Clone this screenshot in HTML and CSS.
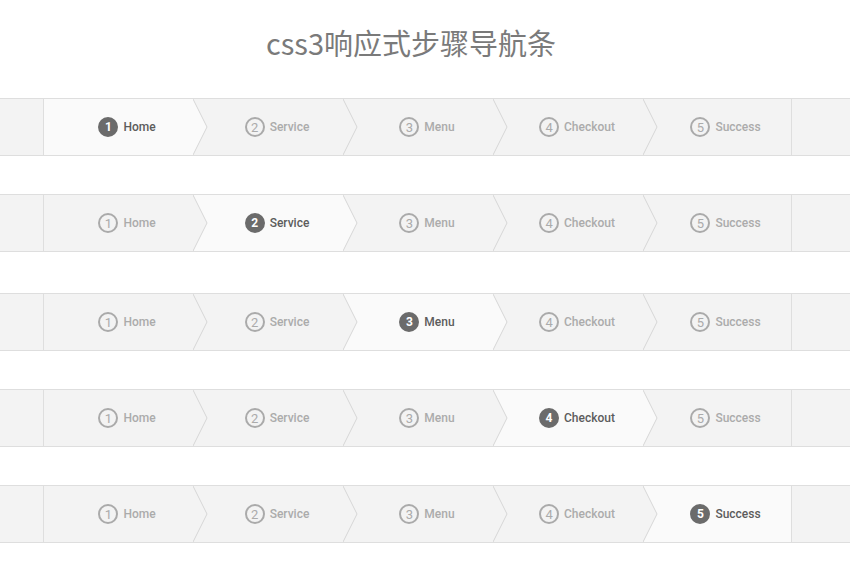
FILE: index.html
```html
<!DOCTYPE html>
<html lang="zh-CN">
<head>
    <meta charset="UTF-8">
    <title>css3响应式步骤导航条</title>
    <link rel="stylesheet" href="styles.css">
</head>
<body>
    <h1>css3响应式步骤导航条</h1>

    <ul class="steps">
        <li class="step first active"><span class="num">1</span>Home<svg class="arrow" width="15" height="56"><polyline points="0,0 14,28 0,56"/></svg></li>
        <li class="step"><span class="num">2</span>Service<svg class="arrow" width="15" height="56"><polyline points="0,0 14,28 0,56"/></svg></li>
        <li class="step"><span class="num">3</span>Menu<svg class="arrow" width="15" height="56"><polyline points="0,0 14,28 0,56"/></svg></li>
        <li class="step"><span class="num">4</span>Checkout<svg class="arrow" width="15" height="56"><polyline points="0,0 14,28 0,56"/></svg></li>
        <li class="step last"><span class="num">5</span>Success</li>
    </ul>

    <ul class="steps">
        <li class="step first"><span class="num">1</span>Home<svg class="arrow" width="15" height="56"><polyline points="0,0 14,28 0,56"/></svg></li>
        <li class="step active"><span class="num">2</span>Service<svg class="arrow" width="15" height="56"><polyline points="0,0 14,28 0,56"/></svg></li>
        <li class="step"><span class="num">3</span>Menu<svg class="arrow" width="15" height="56"><polyline points="0,0 14,28 0,56"/></svg></li>
        <li class="step"><span class="num">4</span>Checkout<svg class="arrow" width="15" height="56"><polyline points="0,0 14,28 0,56"/></svg></li>
        <li class="step last"><span class="num">5</span>Success</li>
    </ul>

    <ul class="steps">
        <li class="step first"><span class="num">1</span>Home<svg class="arrow" width="15" height="56"><polyline points="0,0 14,28 0,56"/></svg></li>
        <li class="step"><span class="num">2</span>Service<svg class="arrow" width="15" height="56"><polyline points="0,0 14,28 0,56"/></svg></li>
        <li class="step active"><span class="num">3</span>Menu<svg class="arrow" width="15" height="56"><polyline points="0,0 14,28 0,56"/></svg></li>
        <li class="step"><span class="num">4</span>Checkout<svg class="arrow" width="15" height="56"><polyline points="0,0 14,28 0,56"/></svg></li>
        <li class="step last"><span class="num">5</span>Success</li>
    </ul>

    <ul class="steps">
        <li class="step first"><span class="num">1</span>Home<svg class="arrow" width="15" height="56"><polyline points="0,0 14,28 0,56"/></svg></li>
        <li class="step"><span class="num">2</span>Service<svg class="arrow" width="15" height="56"><polyline points="0,0 14,28 0,56"/></svg></li>
        <li class="step"><span class="num">3</span>Menu<svg class="arrow" width="15" height="56"><polyline points="0,0 14,28 0,56"/></svg></li>
        <li class="step active"><span class="num">4</span>Checkout<svg class="arrow" width="15" height="56"><polyline points="0,0 14,28 0,56"/></svg></li>
        <li class="step last"><span class="num">5</span>Success</li>
    </ul>

    <ul class="steps">
        <li class="step first"><span class="num">1</span>Home<svg class="arrow" width="15" height="56"><polyline points="0,0 14,28 0,56"/></svg></li>
        <li class="step"><span class="num">2</span>Service<svg class="arrow" width="15" height="56"><polyline points="0,0 14,28 0,56"/></svg></li>
        <li class="step"><span class="num">3</span>Menu<svg class="arrow" width="15" height="56"><polyline points="0,0 14,28 0,56"/></svg></li>
        <li class="step"><span class="num">4</span>Checkout<svg class="arrow" width="15" height="56"><polyline points="0,0 14,28 0,56"/></svg></li>
        <li class="step last active"><span class="num">5</span>Success</li>
    </ul>
</body>
</html>
```

FILE: styles.css
```css
body {
    margin: 0;
    background-color: #fff;
    font-family: Roboto, "Noto Sans", sans-serif;
    overflow: hidden;
}
h1 {
    margin: 0;
    padding: 22px 28px 0 0;
    height: 76px;
    box-sizing: border-box;
    text-align: center;
    font-family: "Noto Sans CJK SC", sans-serif;
    font-size: 29px;
    font-weight: normal;
    line-height: 40px;
    color: #7a7a7a;
}
.steps {
    display: flex;
    list-style: none;
    margin: 22px 0 38px;
    padding: 0 0 0 43px;
    height: 56px;
    background-color: #f3f3f3;
    border-top: 1px solid #dedede;
    border-bottom: 1px solid #dedede;
}
.steps + .steps {
    margin-top: 0;
}
.steps:nth-of-type(2) {
    margin-bottom: 41px;
}
.step {
    position: relative;
    display: flex;
    align-items: center;
    justify-content: center;
    width: 150px;
    padding-left: 16px;
    box-sizing: border-box;
    font-size: 12px;
    font-weight: 500;
    color: #ababab;
    background-color: #f3f3f3;
}
.step.first {
    width: 151px;
    border-left: 1px solid #dedede;
}
.step.last {
    width: 148px;
    border-right: 1px solid #dedede;
}
.step.active {
    color: #5c5c5c;
    background-color: #fafafa;
}
.num {
    display: inline-flex;
    align-items: center;
    justify-content: center;
    width: 20px;
    height: 20px;
    margin-right: 5px;
    box-sizing: border-box;
    border: 2px solid #aaa;
    border-radius: 50%;
    font-size: 13px;
    font-weight: normal;
}
.active .num {
    border-color: #6b6b6b;
    background-color: #6b6b6b;
    color: #fff;
    font-size: 12px;
    font-weight: bold;
}
.arrow {
    position: absolute;
    top: 0;
    right: -14px;
    z-index: 1;
    fill: #f3f3f3;
    stroke: #d6d6d6;
    stroke-width: 1;
}
.active .arrow {
    fill: #fafafa;
}
```
